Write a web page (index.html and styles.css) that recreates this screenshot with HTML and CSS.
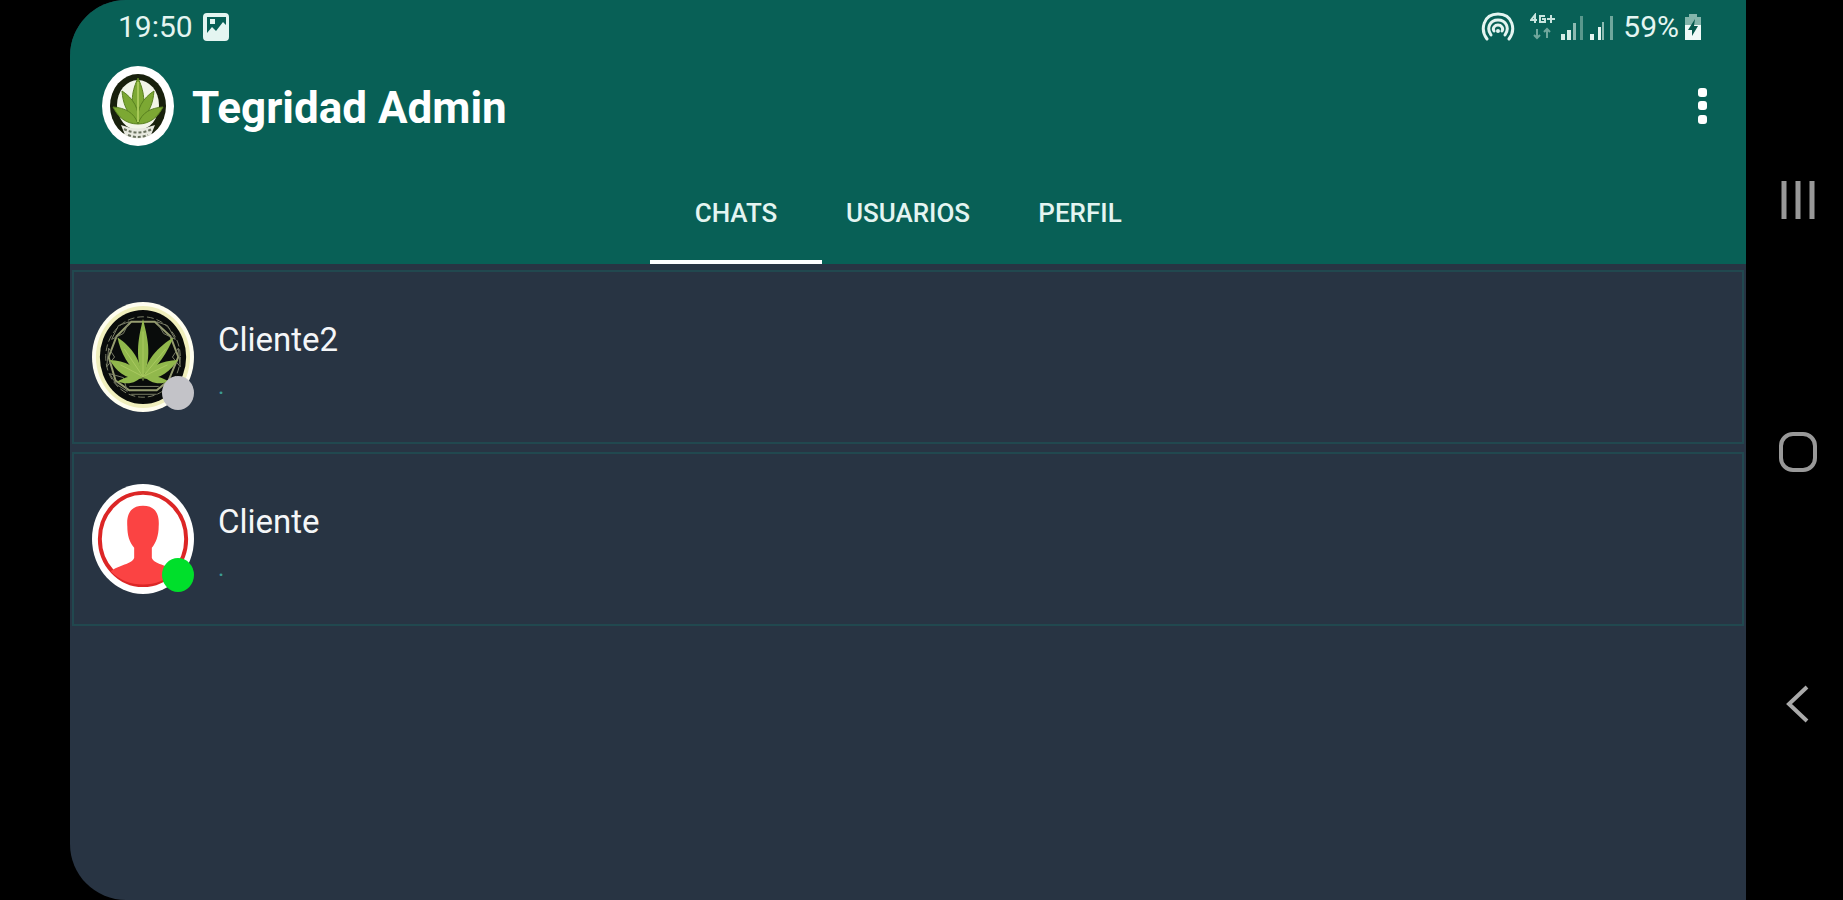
FILE: index.html
```html
<!DOCTYPE html>
<html lang="es">
<head>
<meta charset="utf-8">
<meta name="viewport" content="width=device-width, initial-scale=1">
<title>Tegridad Admin</title>
<link rel="stylesheet" href="styles.css">
</head>
<body>
<div class="device">
  <div class="screen">
    <header class="header">
      <div class="status">
        <div class="status-group">
          <span>19:50</span>
          <svg class="icon-photo" viewBox="0 0 26 28" aria-hidden="true"><path fill="#e4f5f1" fill-rule="evenodd" d="M4 0H22Q26 0 26 4V24Q26 28 22 28H4Q0 28 0 24V4Q0 0 4 0ZM4 4V20L9 14L13 18L20 9L23 12V4Z"/><path fill="#e4f5f1" d="M7 6H12V11H7Z"/></svg>
        </div>
        <div class="status-group status-right">
          <svg class="icon-hotspot" viewBox="0 0 34 30" fill="none" stroke="#e4f5f1" stroke-width="3" stroke-linecap="round" aria-hidden="true"><path d="M6 27C-1 18 2 2 17 2S35 18 28 27M10 23C5 16 9 8 17 8S29 16 24 23"/><path d="M13 19C11 16 14 13 17 13S23 16 21 19"/><circle cx="17" cy="19" r="2" fill="#e4f5f1" stroke="none"/></svg>
          <svg class="icon-data" viewBox="0 0 26 28" aria-hidden="true"><g fill="none" stroke="#c8e4de" stroke-width="2"><path d="M5 10V2L1 7H7M15 3H10V9H15V6H12M17 6H25M21 2V10"/><path stroke="#6fa79c" d="M7 16V25M4 22L7 25L10 22M17 25V16M14 19L17 16L20 19"/></g></svg>
          <svg class="icon-signal" viewBox="0 0 24 28" aria-hidden="true"><path fill="#d5ebe6" d="M0 21H4V27H0ZM6 17H10V27H6Z"/><path fill="#8cbab1" d="M12 10H15V27H12Z"/><path fill="#5a988d" d="M19 3H22V27H19Z"/></svg>
          <svg class="icon-signal" viewBox="0 0 24 28" aria-hidden="true"><path fill="#e4f5f1" d="M0 21H4V27H0ZM8 14H11V27H8Z"/><path fill="#8cbab1" d="M12 9H14V27H12Z"/><path fill="#6fa79c" d="M20 3H23V27H20Z"/></svg>
          <span class="battery-level">59%</span>
          <svg class="icon-battery" viewBox="0 0 18 28" aria-hidden="true"><path fill="#83b5ab" d="M5 1H13V4H17V12H1V4H5Z"/><path fill="#f0faf8" d="M1 12H17V27H1Z"/><path fill="#07594d" d="M11 6L4 17H8V23L14 13H10Z"/></svg>
        </div>
      </div>

      <div class="appbar">
        <svg class="logo" viewBox="0 0 72 80" aria-hidden="true">
          <ellipse cx="36" cy="40" rx="36" ry="40" fill="#fff"/>
          <ellipse cx="36" cy="40" rx="28" ry="32" fill="#18200c"/>
          <ellipse cx="36" cy="39" rx="21" ry="25" fill="#f2f5e8"/>
          <g fill="#7ca833" stroke="#58801f" stroke-width="1">
            <path d="M36 56C26 38 31 23 36 12C41 23 46 38 36 56Z"/>
            <path d="M36 57C24 47 21 37 20 25C31 32 38 43 36 57Z"/>
            <path d="M36 57C48 47 51 37 52 25C41 32 34 43 36 57Z"/>
            <path d="M36 58C24 58 16 51 11 41C23 42 32 46 36 58Z"/>
            <path d="M36 58C48 58 56 51 61 41C49 42 40 46 36 58Z"/>
          </g>
          <path d="M36 16V56" stroke="#a8c958" stroke-width="2"/>
          <path d="M19 59Q36 66 53 59L49 69Q36 76 23 69Z" fill="#e7e9df"/>
          <path d="M22 63Q36 70 50 63M26 69Q36 73 46 69" fill="none" stroke="#68705d" stroke-width="2" stroke-dasharray="3 2"/>
        </svg>
        <h1 class="title">Tegridad Admin</h1>
        <button class="more" type="button" aria-label="Más opciones">
          <svg viewBox="0 0 10 38" aria-hidden="true"><g fill="#fff"><rect x="1" y="1" width="9" height="9" rx="3"/><rect x="1" y="14" width="9" height="9" rx="3"/><rect x="1" y="28" width="9" height="9" rx="3"/></g></svg>
        </button>
      </div>

      <nav class="tabs" aria-label="Secciones">
        <button class="tab tab-active" type="button">CHATS</button>
        <button class="tab" type="button">USUARIOS</button>
        <button class="tab" type="button">PERFIL</button>
      </nav>
    </header>

    <main class="chats">
      <a class="chat" href="#cliente2">
        <span class="avatar">
          <svg viewBox="0 0 104 112" aria-hidden="true">
            <ellipse cx="52" cy="56" rx="52" ry="56" fill="#fffef0"/>
            <ellipse cx="52" cy="56" rx="48" ry="52" fill="#f0efbc"/>
            <ellipse cx="52" cy="56" rx="44" ry="48" fill="#090c0b"/>
            <g fill="none" stroke="#7b8068" stroke-width="1">
              <ellipse cx="52" cy="56" rx="38" ry="41" stroke-dasharray="7 3"/>
              <path stroke="#969d70" stroke-width="2" d="M40 20H64L80 35L88 56L78 80L66 90H38L24 80L17 56L25 35Z"/>
              <path d="M27 24L38 20L32 32L20 38ZM77 24L66 20L73 32L85 38ZM17 47L23 56L15 66ZM88 47L82 56L90 66ZM18 73L32 77L36 91L25 84ZM38 86H68M40 94H66"/>
            </g>
            <g fill="#91b84c">
              <path d="M52 78C43 53 48 35 52 17C56 35 62 53 52 78Z"/>
              <path d="M51 78C37 66 29 51 26 36C40 45 51 60 51 78Z"/>
              <path d="M53 78C67 66 77 51 83 36C68 45 53 60 53 78Z"/>
              <path d="M51 78C36 80 25 71 18 59C34 60 46 65 51 78Z"/>
              <path d="M53 78C68 80 79 71 88 59C70 60 58 65 53 78Z"/>
              <path d="M51 75C42 75 33 76 26 81C37 85 46 82 51 75ZM53 75C62 75 72 76 78 81C68 85 58 82 53 75Z"/>
            </g>
            <path d="M52 30V80M33 48L52 76L75 48M29 64L52 76L77 64" fill="none" stroke="#a9c960" stroke-width="1"/>
          </svg>
          <span class="presence presence-off"></span>
        </span>
        <span class="chat-text"><span class="name">Cliente2</span><span class="message">.</span></span>
      </a>
      <a class="chat" href="#cliente">
        <span class="avatar">
          <svg viewBox="0 0 104 112" aria-hidden="true">
            <ellipse cx="52" cy="56" rx="52" ry="56" fill="#fff"/>
            <ellipse cx="52" cy="56" rx="44" ry="47" fill="none" stroke="#dc2626" stroke-width="4"/>
            <path fill="#fb4343" d="M52 22C64 22 69 30 68 43C68 53 65 60 61 65V75C63 82 77 82 85 89C68 107 36 107 19 89C27 82 41 82 43 75V65C38 59 36 52 36 43C35 30 40 22 52 22Z"/>
          </svg>
          <span class="presence presence-on"></span>
        </span>
        <span class="chat-text"><span class="name">Cliente</span><span class="message">.</span></span>
      </a>
    </main>
  </div>

  <nav class="system-nav" aria-label="Sistema">
    <button type="button" aria-label="Recientes"><svg viewBox="0 0 40 40" aria-hidden="true"><path d="M6 1V39M20 1V39M34 1V39" stroke="#999" stroke-width="5" fill="none"/></svg></button>
    <button type="button" aria-label="Inicio"><svg viewBox="0 0 40 40" aria-hidden="true"><rect x="3" y="2" width="34" height="36" rx="12" fill="none" stroke="#999" stroke-width="4"/></svg></button>
    <button type="button" aria-label="Atrás"><svg viewBox="0 0 40 40" aria-hidden="true"><path d="M29 3L11 20L29 37" fill="none" stroke="#aaa" stroke-width="4"/></svg></button>
  </nav>
</div>
</body>
</html>
```
FILE: styles.css
```css
* {
  box-sizing: border-box;
}

body {
  margin: 0;
  background: #000;
  color: #fff;
  font-family: Roboto, "Noto Sans", sans-serif;
}

button {
  padding: 0;
  border: 0;
  background: none;
  color: inherit;
  font: inherit;
  cursor: pointer;
}

svg {
  display: block;
}

.device {
  display: flex;
  min-height: 100vh;
  padding-left: 70px;
}

.screen {
  flex: 1;
  overflow: hidden;
  background: #283443;
  border-radius: 56px 0 0 56px;
}

.header {
  background: #086056;
}

.status {
  display: flex;
  align-items: center;
  justify-content: space-between;
  height: 54px;
  padding: 0 44px 0 48px;
  color: #e4f5f1;
  font-size: 30px;
  line-height: 32px;
}

.status-group {
  display: flex;
  align-items: center;
  gap: 10px;
}

.status-right {
  gap: 5px;
}

.icon-photo {
  width: 26px;
  height: 28px;
}

.icon-hotspot {
  width: 34px;
  height: 30px;
  margin-right: 10px;
}

.icon-data {
  width: 26px;
  height: 28px;
}

.icon-signal {
  width: 24px;
  height: 28px;
}

.battery-level {
  margin-left: 4px;
}

.icon-battery {
  width: 18px;
  height: 28px;
}

.appbar {
  display: flex;
  align-items: center;
  height: 104px;
  padding: 0 24px 0 32px;
}

.logo {
  width: 72px;
  height: 80px;
}

.title {
  flex: 1;
  margin: 0 0 0 18px;
  padding-top: 4px;
  font-size: 44px;
  font-weight: 700;
  line-height: 56px;
}

.more {
  display: flex;
  align-items: center;
  justify-content: center;
  width: 40px;
  height: 56px;
}

.more svg {
  width: 10px;
  height: 38px;
}

.tabs {
  display: grid;
  grid-template-columns: repeat(3, 172px);
  justify-content: center;
  height: 106px;
}

.tab {
  padding-top: 4px;
  border: solid transparent;
  border-width: 4px 0;
  color: #e4f5f1;
  font-size: 26px;
  font-weight: 500;
}

.tab-active {
  border-bottom-color: #fff;
}

.chats {
  display: grid;
  gap: 8px;
  padding: 6px 2px;
}

.chat {
  display: flex;
  align-items: center;
  gap: 24px;
  height: 174px;
  padding: 0 18px;
  border: 2px solid #21484f;
  color: #f4f6f8;
  text-decoration: none;
}

.avatar {
  position: relative;
}

.avatar svg {
  width: 102px;
  height: 110px;
}

.presence {
  position: absolute;
  right: 0;
  bottom: 2px;
  width: 32px;
  height: 34px;
  border-radius: 50%;
}

.presence-off {
  background: #c3c3c8;
}

.presence-on {
  background: #00df2b;
}

.chat-text {
  display: grid;
  gap: 12px;
  padding-top: 6px;
}

.name {
  font-size: 33px;
  line-height: 40px;
}

.message {
  color: #3c9c94;
  font-size: 24px;
  line-height: 28px;
}

.system-nav {
  display: flex;
  flex-direction: column;
  align-items: center;
  justify-content: center;
  gap: 204px;
  width: 97px;
  padding: 4px 0 0 6px;
}

.system-nav button {
  display: grid;
  place-items: center;
  width: 48px;
  height: 48px;
}

.system-nav svg {
  width: 40px;
  height: 40px;
}
```
